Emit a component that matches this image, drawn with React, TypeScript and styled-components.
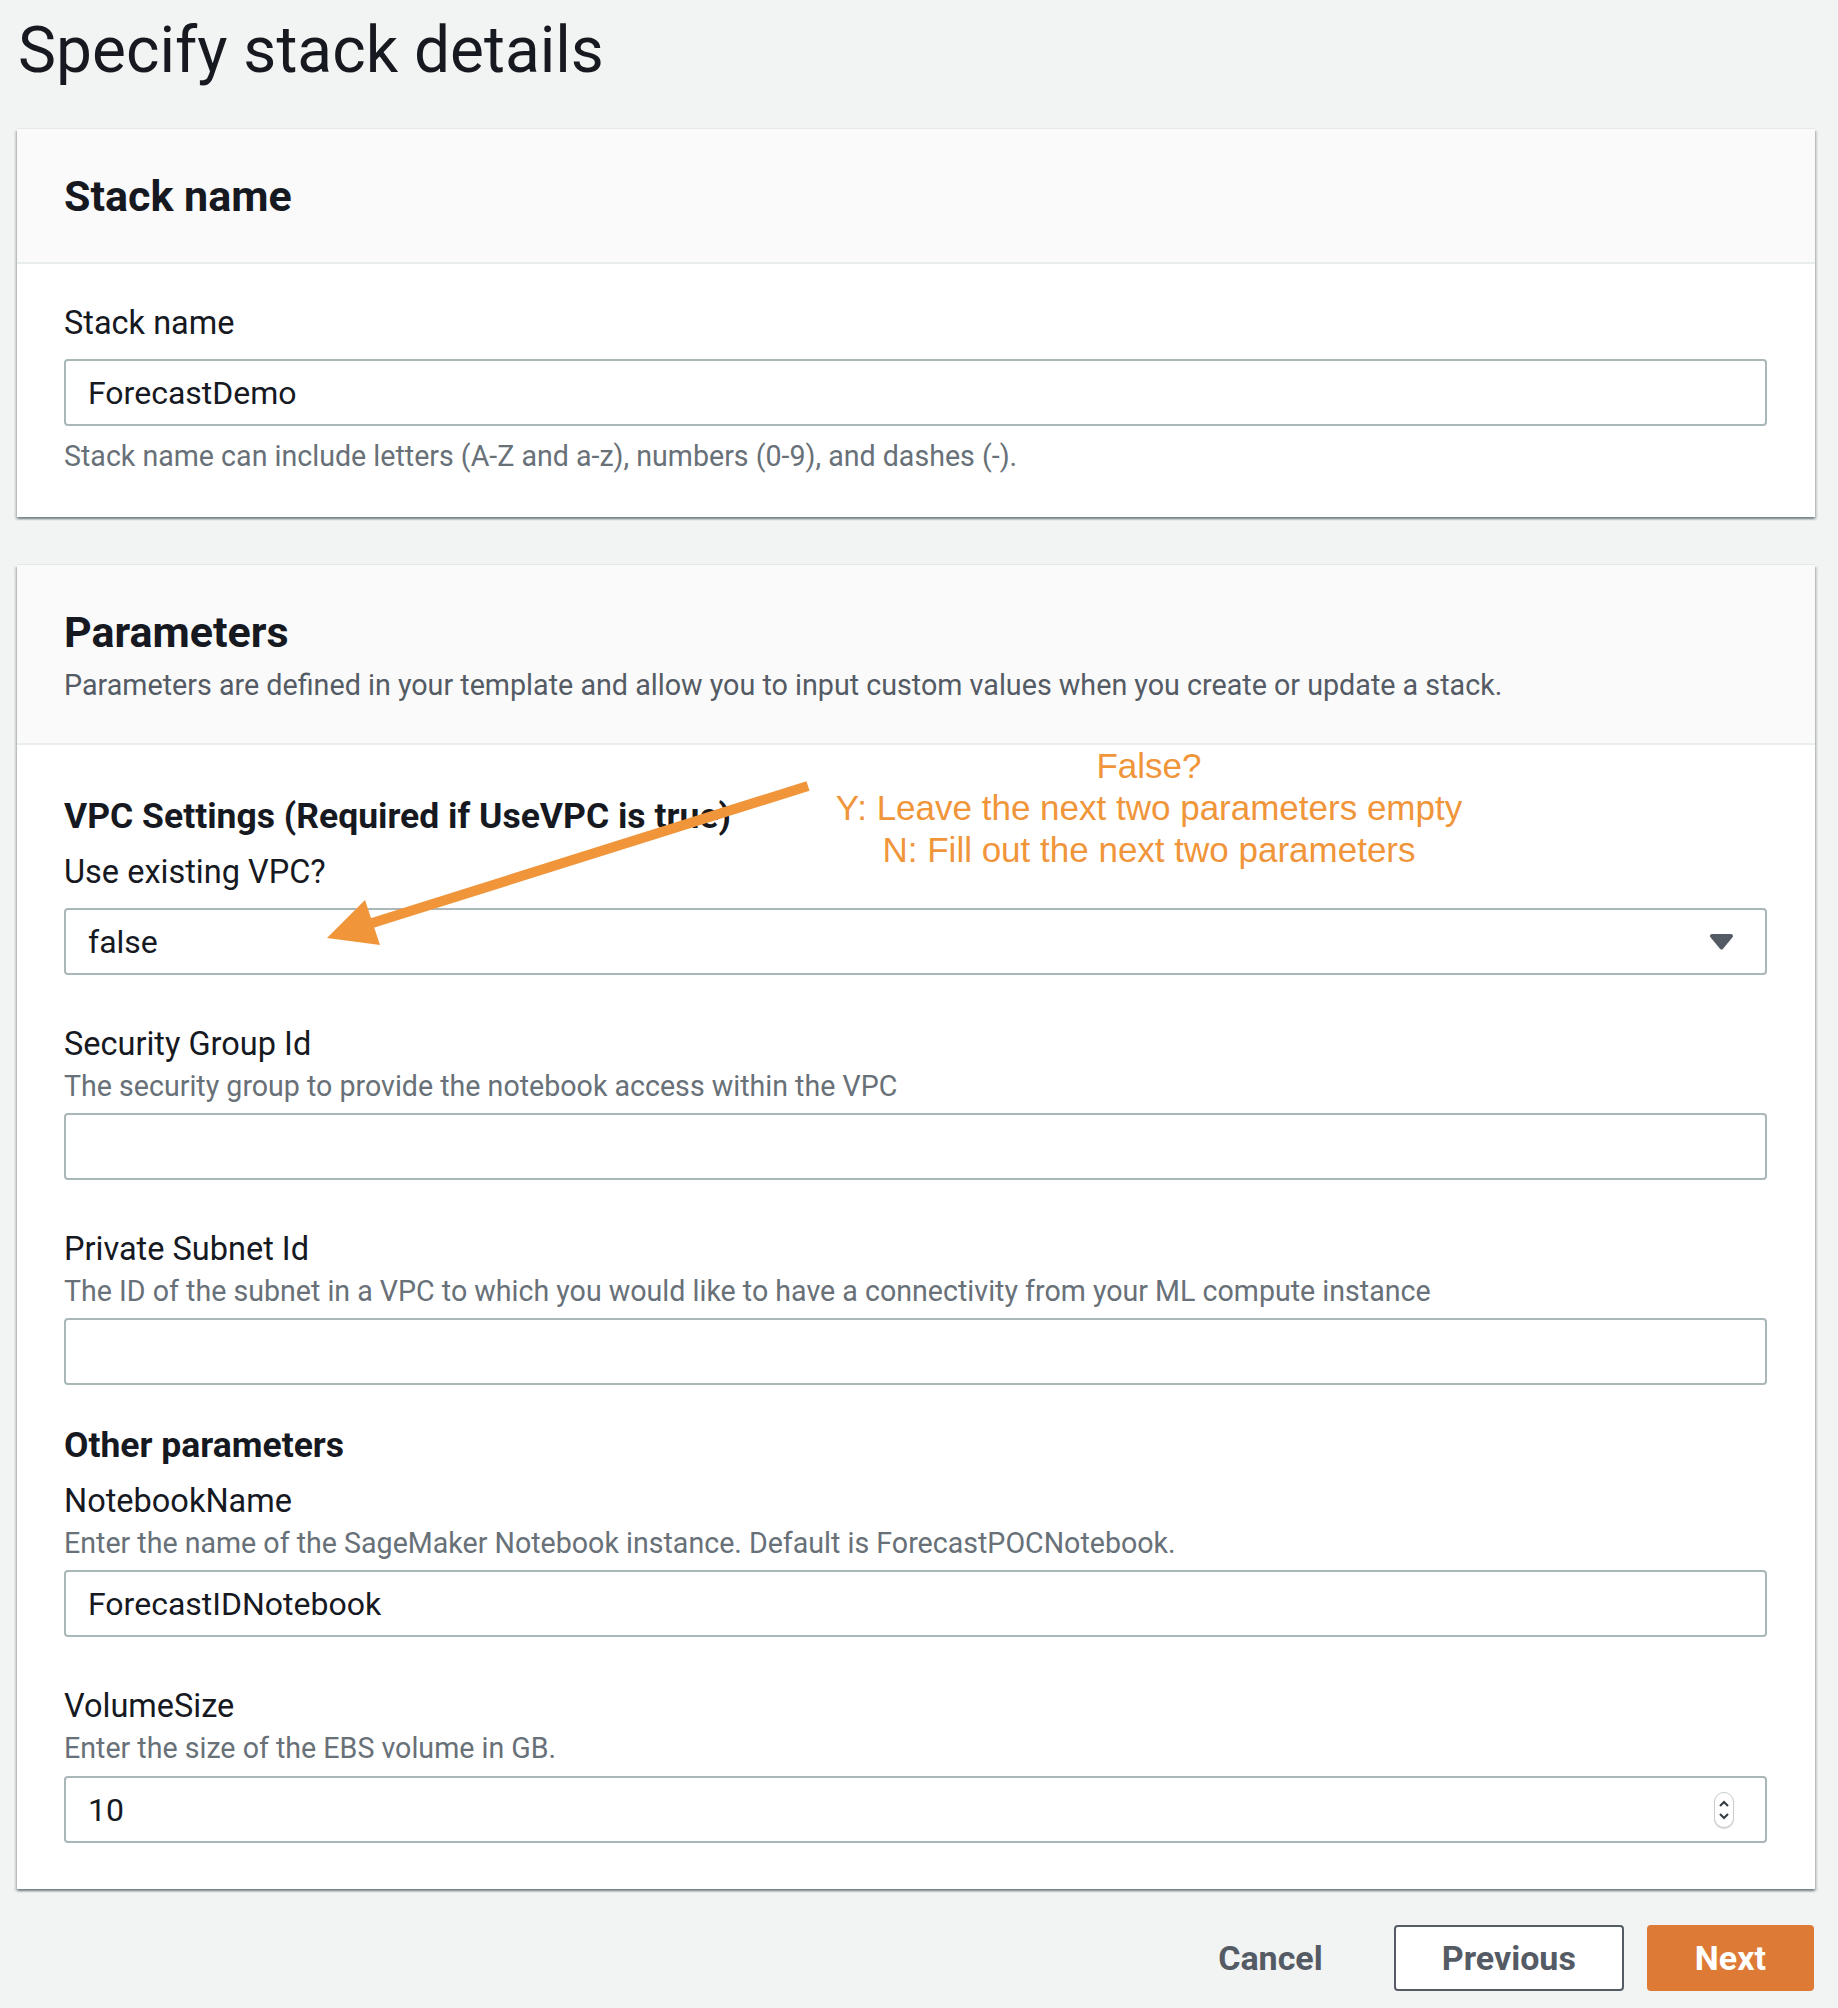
import React from "react";
import styled, { createGlobalStyle } from "styled-components";

const GlobalStyle = createGlobalStyle`
  * { box-sizing: border-box; }
  html, body { margin: 0; padding: 0; background: #f2f3f3; }
  body {
    font-family: Roboto, "Noto Sans", sans-serif;
    color: #16191f;
  }
`;

const Page = styled.main`
  width: 1838px;
  min-height: 2008px;
  padding: 9px 23px 18px 17px;
  display: flex;
  flex-direction: column;
`;

const PageTitle = styled.h1`
  margin: 0 0 36px 1px;
  font-size: 64px;
  line-height: 84px;
  font-weight: 400;
`;

const Card = styled.section`
  position: relative;
  background: #fff;
  box-shadow: 0 -1px 0 0 #e4e8e8, 0 2px 2px 0 rgba(0, 28, 36, 0.35),
    2px 2px 2px 0 rgba(0, 28, 36, 0.15), -2px 2px 2px 0 rgba(0, 28, 36, 0.15);
  & + & {
    margin-top: 48px;
  }
`;

const CardHeader = styled.header`
  background: #fafafa;
  border-bottom: 2px solid #eaeded;
  padding: 41px 47px 39px;
`;

const CardTitle = styled.h2`
  margin: 0;
  font-size: 43px;
  line-height: 53px;
  font-weight: 700;
`;

const CardDescription = styled.p`
  margin: 7px 0 0;
  font-size: 28.7px;
  line-height: 38px;
  color: #545b64;
`;

const CardBody = styled.div<{ $top: number; $bottom: number }>`
  position: relative;
  padding: ${(p) => p.$top}px 48px ${(p) => p.$bottom}px 47px;
  display: flex;
  flex-direction: column;
  gap: 38px;
`;

const Section = styled.div`
  display: flex;
  flex-direction: column;
`;

const SectionHeading = styled.h3`
  margin: 0 0 12px;
  font-size: 35.5px;
  line-height: 44px;
  font-weight: 700;
`;

const FieldList = styled.div`
  display: flex;
  flex-direction: column;
  gap: 47px;
`;

const Field = styled.div`
  display: flex;
  flex-direction: column;
`;

const Label = styled.div`
  font-size: 32.5px;
  line-height: 44px;
`;

const Description = styled.div<{ $mt?: number }>`
  margin-top: ${(p) => p.$mt ?? 0}px;
  font-size: 28.6px;
  line-height: 40px;
  color: #687078;
`;

const Control = styled.div<{ $mt: number }>`
  margin-top: ${(p) => p.$mt}px;
  height: 67px;
  border: 2px solid #aab7b8;
  border-radius: 4px;
  background: #fff;
  display: flex;
  align-items: center;
  justify-content: space-between;
  padding: 0 31px 0 22px;
  font-size: 32px;
  color: #16191f;
`;

const Spinner = styled.span`
  width: 20px;
  height: 36px;
  border: 1px solid #c9cece;
  border-radius: 10px;
  background: #fff;
  box-shadow: 0 1px 1px rgba(0, 0, 0, 0.18);
  display: flex;
  align-items: center;
  justify-content: center;
`;

const Annotation = styled.div`
  position: absolute;
  top: 0;
  left: 732px;
  width: 800px;
  text-align: center;
  font-family: "Liberation Sans", Arial, sans-serif;
  font-size: 35px;
  line-height: 42px;
  color: #f0953a;
  pointer-events: none;
`;

const ArrowLayer = styled.svg`
  position: absolute;
  top: 0;
  left: 0;
  pointer-events: none;
`;

const Footer = styled.footer`
  margin-top: 36px;
  display: flex;
  justify-content: flex-end;
  gap: 23px;
  padding-right: 1px;
`;

const Button = styled.button<{ $variant: "link" | "normal" | "primary" }>`
  height: 66px;
  padding: 0 46px;
  border-radius: 4px;
  font-family: inherit;
  font-size: 34px;
  font-weight: 700;
  cursor: pointer;
  border: 2px solid
    ${(p) =>
      p.$variant === "link" ? "transparent" : p.$variant === "normal" ? "#545b64" : "#dd7a35"};
  background: ${(p) =>
    p.$variant === "link" ? "transparent" : p.$variant === "normal" ? "#fff" : "#dd7a35"};
  color: ${(p) => (p.$variant === "primary" ? "#fff" : "#545b64")};
`;

const CaretDown = () => (
  <svg width="25" height="17" viewBox="0 0 25 17">
    <path
      d="M3 3 H22 L12.5 14.5 Z"
      fill="#545b64"
      stroke="#545b64"
      strokeWidth="4"
      strokeLinejoin="round"
    />
  </svg>
);

const SpinIcon = () => (
  <svg width="18" height="34" viewBox="0 0 18 34">
    <path d="M5 13 L9 9 L13 13" fill="none" stroke="#3a3f45" strokeWidth="2.2" />
    <path d="M5 21 L9 25 L13 21" fill="none" stroke="#3a3f45" strokeWidth="2.2" />
  </svg>
);

export default function App() {
  return (
    <>
      <GlobalStyle />
      <Page>
        <PageTitle>Specify stack details</PageTitle>

        <Card>
          <CardHeader>
            <CardTitle>Stack name</CardTitle>
          </CardHeader>
          <CardBody $top={37} $bottom={41}>
            <Field>
              <Label>Stack name</Label>
              <Control $mt={14}>ForecastDemo</Control>
              <Description $mt={10}>
                Stack name can include letters (A-Z and a-z), numbers (0-9), and dashes (-).
              </Description>
            </Field>
          </CardBody>
        </Card>

        <Card>
          <CardHeader>
            <CardTitle>Parameters</CardTitle>
            <CardDescription>
              Parameters are defined in your template and allow you to input custom values when
              you create or update a stack.
            </CardDescription>
          </CardHeader>
          <CardBody $top={49} $bottom={46}>
            <Section>
              <SectionHeading>VPC Settings (Required if UseVPC is true)</SectionHeading>
              <FieldList>
                <Field>
                  <Label>Use existing VPC?</Label>
                  <Control $mt={14}>
                    <span>false</span>
                    <CaretDown />
                  </Control>
                </Field>
                <Field>
                  <Label>Security Group Id</Label>
                  <Description>The security group to provide the notebook access within the VPC</Description>
                  <Control $mt={7} />
                </Field>
                <Field>
                  <Label>Private Subnet Id</Label>
                  <Description>
                    The ID of the subnet in a VPC to which you would like to have a connectivity from
                    your ML compute instance
                  </Description>
                  <Control $mt={7} />
                </Field>
              </FieldList>
            </Section>

            <Section>
              <SectionHeading>Other parameters</SectionHeading>
              <FieldList>
                <Field>
                  <Label>NotebookName</Label>
                  <Description>
                    Enter the name of the SageMaker Notebook instance. Default is ForecastPOCNotebook.
                  </Description>
                  <Control $mt={7}>ForecastIDNotebook</Control>
                </Field>
                <Field>
                  <Label>VolumeSize</Label>
                  <Description>Enter the size of the EBS volume in GB.</Description>
                  <Control $mt={8}>
                    <span>10</span>
                    <Spinner>
                      <SpinIcon />
                    </Spinner>
                  </Control>
                </Field>
              </FieldList>
            </Section>

            <Annotation>
              False?
              <br />
              Y: Leave the next two parameters empty
              <br />
              N: Fill out the next two parameters
            </Annotation>
            <ArrowLayer width="900" height="260" viewBox="0 0 900 260">
              <line x1="791" y1="41" x2="352" y2="179" stroke="#f0953a" strokeWidth="10" />
              <polygon points="310,193 348,155 363,200" fill="#f0953a" />
            </ArrowLayer>
          </CardBody>
        </Card>

        <Footer>
          <Button $variant="link">Cancel</Button>
          <Button $variant="normal">Previous</Button>
          <Button $variant="primary">Next</Button>
        </Footer>
      </Page>
    </>
  );
}
